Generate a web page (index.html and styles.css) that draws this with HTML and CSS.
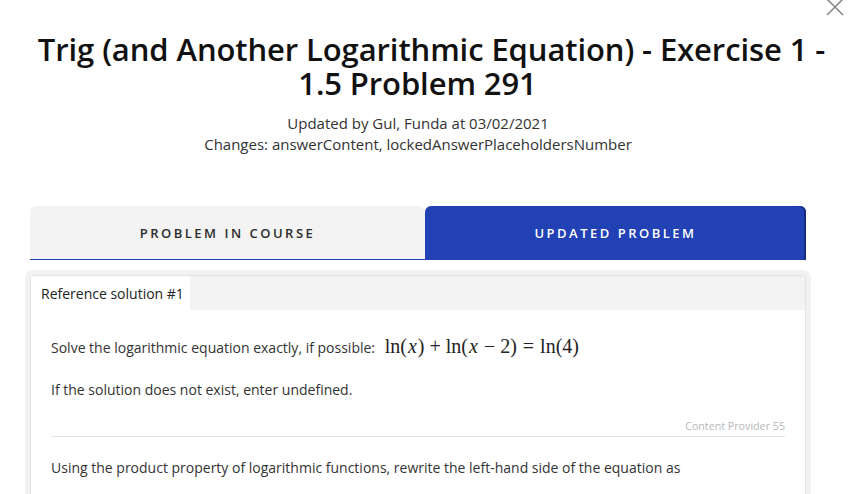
FILE: index.html
```html
<!DOCTYPE html>
<html>
<head>
<meta charset="utf-8">
<link rel="stylesheet" href="styles.css">
</head>
<body>
<div class="modal">
  <button class="close" aria-label="Close">
    <svg width="20" height="20" viewBox="0 0 20 20"><path d="M2 1 L18 17 M18 1 L2 17" stroke="#8a8a8a" stroke-width="1.6" fill="none"/></svg>
  </button>
  <header class="head">
    <h1 class="title">Trig (and Another Logarithmic Equation) - Exercise 1 - <span class="tail">1.5 Problem 291</span></h1>
    <div class="metas">
      <p class="meta">Updated by Gul, Funda at 03/02/2021</p>
      <p class="meta">Changes: answerContent, lockedAnswerPlaceholdersNumber</p>
    </div>
  </header>
  <div class="content">
    <nav class="tabs">
      <div class="tab">PROBLEM IN COURSE</div>
      <div class="tab active">UPDATED PROBLEM</div>
    </nav>
    <section class="panel">
      <div class="panel-inner">
        <div class="subtabs">
          <div class="subtab">Reference solution #1</div>
        </div>
        <div class="body">
          <p class="para p1">Solve the logarithmic equation exactly, if possible: <span class="math"><span class="fn">ln</span>(<i>x</i>)<span class="op">+</span><span class="fn">ln</span>(<i>x</i><span class="op">−</span>2)<span class="rel">=</span><span class="fn">ln</span>(4)</span></p>
          <p class="para p2">If the solution does not exist, enter undefined.</p>
          <div class="provider">Content Provider 55</div>
          <p class="para p3">Using the product property of logarithmic functions, rewrite the left-hand side of the equation as</p>
        </div>
      </div>
    </section>
  </div>
</div>
</body>
</html>
```
FILE: styles.css
```css
* { box-sizing: border-box; }
html, body { margin: 0; padding: 0; background: #fff; }
body {
  font-family: "Open Sans", "Liberation Sans", sans-serif;
  color: #222;
  width: 863px;
  height: 494px;
  overflow: hidden;
}
.modal { position: relative; }
.close {
  position: absolute;
  top: -2px;
  right: 18px;
  border: 0;
  background: none;
  padding: 0;
  width: 20px;
  height: 20px;
}
.head {
  text-align: center;
  padding-top: 32px;
}
.title {
  font-size: 31px;
  font-weight: 600;
  line-height: 34px;
  margin: 0 0 13px;
  padding: 0 20px;
  color: #111;
  letter-spacing: -0.1px;
}
.title .tail { padding-right: 28px; }
.metas {
  margin: 0 57px 0 30px;
}
.meta {
  margin: 0;
  font-size: 15px;
  line-height: 21px;
  color: #333;
}
.content {
  width: 776px;
  margin: 51px 0 0 30px;
}
.tabs {
  display: flex;
  height: 54px;
}
.tab {
  flex: 0 0 395px;
  display: flex;
  align-items: center;
  justify-content: center;
  background: #f3f3f3;
  border-radius: 6px 6px 0 0;
  border-bottom: 1.5px solid #2241b5;
  font-size: 13px;
  font-weight: 600;
  letter-spacing: 2.5px;
  color: #2b2b2b;
}
.tab.active {
  flex: 1;
  background: #2241b5;
  color: #fff;
  box-shadow: inset -2px 0 0 #152a80;
  border-bottom: 0;
}
.panel {
  margin: 10px -5px 0;
  border: 5px solid #f2f2f2;
  border-bottom: 0;
  border-radius: 8px 8px 0 0;
}
.panel-inner {
  border: 1px solid #e4e4e4;
  border-bottom: 0;
  border-radius: 3px 3px 0 0;
}
.subtabs {
  display: flex;
  background: #f3f3f3;
  height: 34px;
}
.subtab {
  background: #fff;
  padding: 0 6px 0 10px;
  display: flex;
  align-items: center;
  font-size: 14px;
  color: #222;
  white-space: nowrap;
}
.body {
  padding: 26px 20px 30px;
}
.para {
  margin: 0;
  font-size: 14px;
  line-height: 22px;
  color: #333;
}
.math {
  font-family: "Liberation Serif", "DejaVu Serif", serif;
  font-size: 20px;
  line-height: 1;
  color: #222;
  margin-left: 6px;
}
.math i { font-style: italic; margin: 0 1px; }
.math .op { margin: 0 5px; }
.math .rel { margin: 0 6px; }
.p2 { margin-top: 20px; }
.provider {
  margin-top: 18px;
  text-align: right;
  font-size: 10.7px;
  color: #b8b8b8;
  line-height: 14px;
  padding-bottom: 3px;
  border-bottom: 1px solid #e4e4e4;
}
.p3 { margin-top: 20px; }
```
